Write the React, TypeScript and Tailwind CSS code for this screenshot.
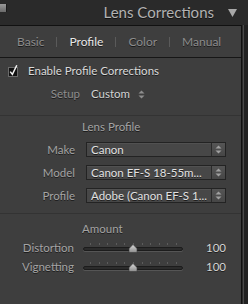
import React from "react";

const labelCls = "text-[#a4a4a4] [text-shadow:0_1px_0_rgba(0,0,0,0.55)]";

function UpDown({ color = "#9a9a9a" }: { color?: string }) {
  return (
    <svg width="7" height="9" viewBox="0 0 7 9" className="block">
      <path d="M3.5 0.5 L6.5 3.5 H0.5 Z" fill={color} />
      <path d="M3.5 8.5 L6.5 5.5 H0.5 Z" fill={color} />
    </svg>
  );
}

function Select({ value }: { value: string }) {
  return (
    <div className="flex h-[15px] w-[140px] items-stretch border border-[#232323] bg-[#474747] shadow-[inset_0_1px_0_rgba(255,255,255,0.06)]">
      <span className="flex-1 overflow-hidden whitespace-nowrap pl-[4px] text-[11.5px] leading-[13px] text-[#e2e2e2] [text-shadow:0_1px_0_rgba(0,0,0,0.6)]">
        {value}
      </span>
      <span className="flex w-[14px] items-center justify-center border-l border-[#2a2a2a] bg-gradient-to-b from-[#555] to-[#464646]">
        <UpDown color="#a0a0a0" />
      </span>
    </div>
  );
}

function Slider({ label, value }: { label: string; value: string }) {
  return (
    <div className="flex h-[14px] items-center">
      <span className={`w-[74px] text-right text-[11.5px] leading-[14px] ${labelCls}`}>{label}</span>
      <div className="relative ml-[9px] h-[14px] w-[100px]">
        <div className="absolute left-[7px] right-[6px] top-[2px] flex justify-between">
          {Array.from({ length: 11 }).map((_, i) => (
            <span key={i} className="block h-[2px] w-px bg-[#5c5c5c]" />
          ))}
        </div>
        <div className="absolute left-0 right-0 top-[6px] h-[4px] rounded-full border border-[#1c1c1c] bg-[#2c2c2c] shadow-[0_1px_0_rgba(255,255,255,0.12)]" />
        <svg width="10" height="9" viewBox="0 0 10 9" className="absolute left-[45px] top-[3px]">
          <defs>
            <linearGradient id={`g-${label}`} x1="0" y1="0" x2="0" y2="1">
              <stop offset="0" stopColor="#dadada" />
              <stop offset="1" stopColor="#8c8c8c" />
            </linearGradient>
          </defs>
          <path d="M5 0.5 L9 4.5 V8.5 H1 V4.5 Z" fill={`url(#g-${label})`} stroke="#3a3a3a" strokeWidth="0.6" />
        </svg>
      </div>
      <span className="flex-1 pr-[15px] text-right text-[11.5px] leading-[14px] text-[#d4d4d4] [text-shadow:0_1px_0_rgba(0,0,0,0.55)]">
        {value}
      </span>
    </div>
  );
}

export default function App() {
  return (
    <div
      className="flex h-[304px] w-[248px] flex-col overflow-hidden bg-[#2a2a2a]"
      style={{ fontFamily: "Lato, 'Noto Sans', sans-serif" }}
    >
      {/* panel header */}
      <div className="flex h-[25px] items-start">
        <div className="mt-[4px] h-[8px] w-[7px] border-r border-[#1a1a1a] bg-gradient-to-b from-[#9a9a9a] to-[#6a6a6a]" />
        <div className="flex-1" />
        <span className="mt-[3px] text-[15px] leading-[19px] text-[#b2b2b2] [text-shadow:0_1px_0_rgba(0,0,0,0.6)]">
          Lens Corrections
        </span>
        <svg width="9" height="8" viewBox="0 0 9 8" className="ml-[14px] mr-[11px] mt-[9px]">
          <path d="M0 0 H9 L4.5 8 Z" fill="#a8a8a8" />
        </svg>
      </div>

      <div className="flex flex-1">
        <div className="flex w-[242px] flex-col border-r border-t border-[#111] bg-[#3e3e3e]">
          {/* tabs */}
          <div className="flex h-[32px] items-center gap-[12px] border-b border-[#161616] pl-[17px] text-[12px] [text-shadow:0_1px_0_rgba(0,0,0,0.6)]">
            <span className="text-[#8c8c8c]">Basic</span>
            <span className="h-[10px] w-px bg-[#5a5a5a]" />
            <span className="text-[#e8e8e8]">Profile</span>
            <span className="h-[10px] w-px bg-[#5a5a5a]" />
            <span className="text-[#8c8c8c]">Color</span>
            <span className="h-[10px] w-px bg-[#5a5a5a]" />
            <span className="text-[#8c8c8c]">Manual</span>
          </div>

          {/* enable */}
          <div className="mt-[6px] flex h-[14px] items-center">
            <svg width="16" height="14" viewBox="0 0 16 14" className="ml-[8px]">
              <rect x="0.5" y="3.5" width="9" height="9" fill="#111" stroke="#6a6a6a" />
              <path d="M2.2 7.6 L4.4 10.4 L8.8 1.2" fill="none" stroke="#f2f2f2" strokeWidth="1.5" />
            </svg>
            <span className="ml-[4px] text-[11.5px] leading-[14px] text-[#dadada] [text-shadow:0_1px_0_rgba(0,0,0,0.6)]">
              Enable Profile Corrections
            </span>
          </div>

          {/* setup */}
          <div className="mt-[9px] flex h-[14px] items-center">
            <span className="w-[80px] text-right text-[11.5px] leading-[14px] text-[#8e8e8e] [text-shadow:0_1px_0_rgba(0,0,0,0.55)]">
              Setup
            </span>
            <span className="ml-[11px] text-[11.5px] leading-[14px] text-[#d4d4d4] [text-shadow:0_1px_0_rgba(0,0,0,0.55)]">
              Custom
            </span>
            <span className="ml-[8px]">
              <UpDown color="#8e8e8e" />
            </span>
          </div>

          {/* lens profile */}
          <div className="mt-[14px] border-t border-[#333] pt-[4px]">
            <div className={`h-[14px] pl-[82px] text-[11.5px] leading-[14px] ${labelCls}`}>Lens Profile</div>
            <div className="mt-[8px] flex flex-col gap-[8px]">
              {[
                ["Make", "Canon"],
                ["Model", "Canon EF-S 18-55m..."],
                ["Profile", "Adobe (Canon EF-S 1..."],
              ].map(([l, v]) => (
                <div key={l} className="flex h-[15px] items-center">
                  <span className={`w-[75px] text-right text-[11.5px] leading-[15px] ${labelCls}`}>{l}</span>
                  <span className="ml-[11px]">
                    <Select value={v} />
                  </span>
                </div>
              ))}
            </div>
          </div>

          {/* amount */}
          <div className="mt-[10px] border-t border-[#333] pt-[8px]">
            <div className={`h-[14px] pl-[82px] text-[11.5px] leading-[14px] ${labelCls}`}>Amount</div>
            <div className="mt-[5px] flex flex-col gap-[5px]">
              <Slider label="Distortion" value="100" />
              <Slider label="Vignetting" value="100" />
            </div>
          </div>
        </div>

        {/* right edge */}
        <div className="flex w-[6px]">
          <div className="w-px" />
          <div className="w-px bg-[#4a4a4a]" />
          <div className="flex-1 bg-[#222]" />
        </div>
      </div>
    </div>
  );
}
